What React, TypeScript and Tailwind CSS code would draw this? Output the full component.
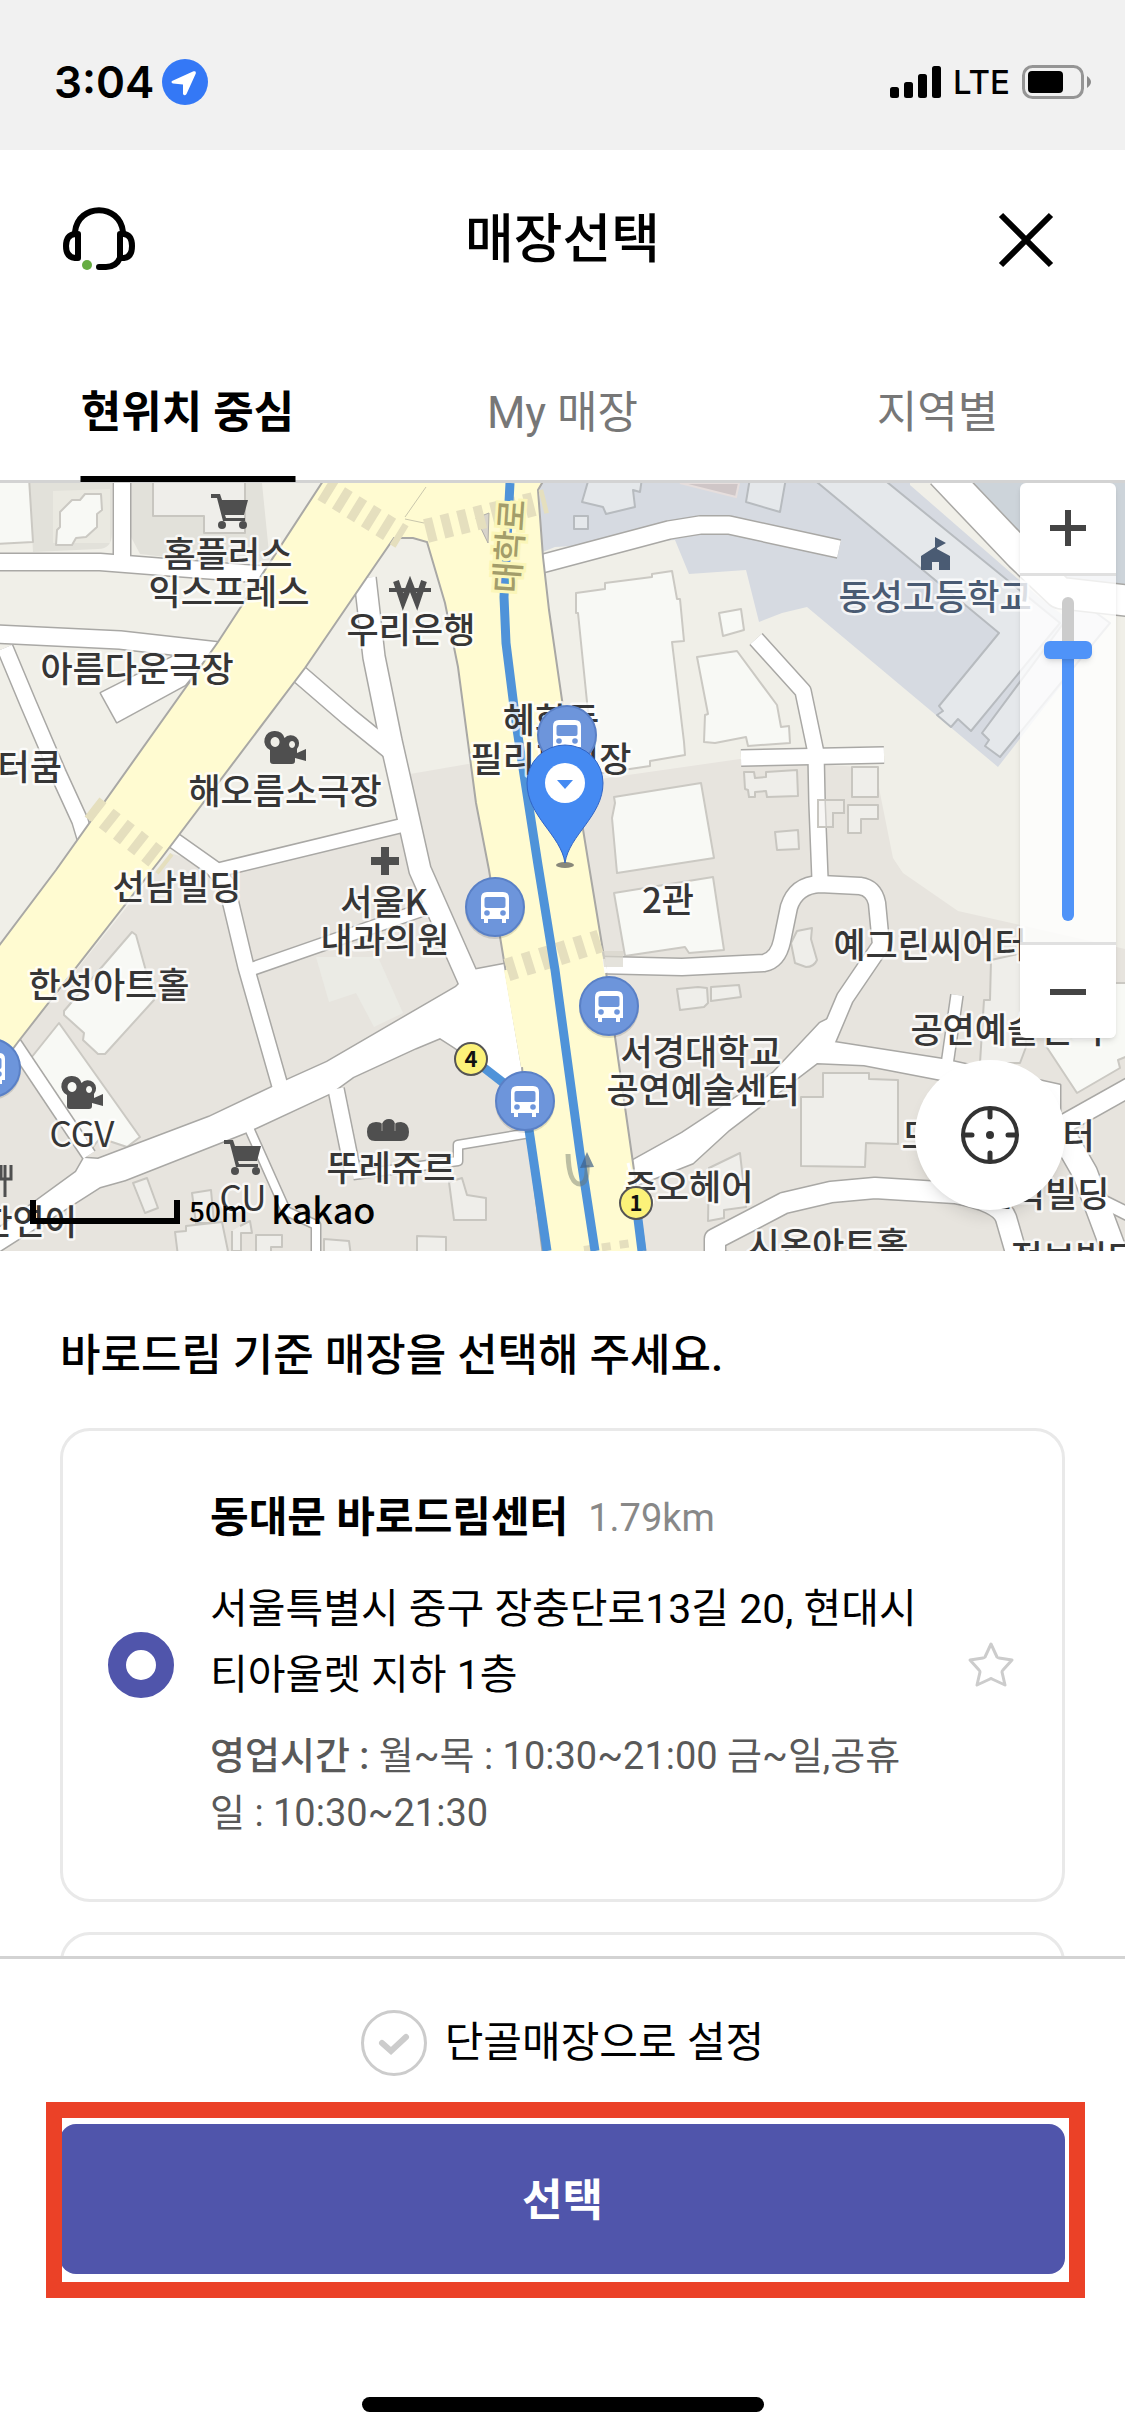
import React, { useState } from "react";

const ROADS: { d: string; w: number }[] = [
  { d: "M-5 79H100L164 84L270 92", w: 16 },
  { d: "M122 -5V78", w: 16 },
  { d: "M-5 151L120 157L218 168", w: 17 },
  { d: "M5 165L28 220L58 290L80 338L86 358", w: 15 },
  { d: "M365 95L374 174L391 258L405 320L420 387L470 500", w: 21 },
  { d: "M298 190L349 234L391 268", w: 17 },
  { d: "M214 388L404 342", w: 13 },
  { d: "M172 356L213 385L226 400L246 484L282 610", w: 15 },
  { d: "M246 488L430 424", w: 12 },
  { d: "M14 560L89 672", w: 13 },
  { d: "M249 645L286 728L316 742V773", w: 8 },
  { d: "M336 606L353 690", w: 15 },
  { d: "M353 692L458 678V662L530 650", w: 8 },
  { d: "M541 81L669 47L700 42H729L839 66", w: 17 },
  { d: "M756 156L803 208L816 270L817 320L820 396", w: 15 },
  { d: "M741 275L884 272", w: 15 },
  { d: "M598 482L682 484L764 480Q778 477 782 458L789 424Q796 402 820 401L860 403Q874 405 877 420L881 462L845 515L826 560", w: 16 },
  { d: "M957 512L947 582", w: 11 },
  { d: "M715 773V756L784 720L831 709L875 705L955 710Q1000 718 1006 735L1017 773", w: 20 },
  { d: "M1130 604L1055 646", w: 18 },
  { d: "M1062 650L1085 690L1116 773", w: 24 },
  { d: "M1098 716L1130 732", w: 12 },
  { d: "M942 -10L1020 72L1060 110L1130 118", w: 30 },
];

const ROAD_AREAS = [
  "M101 210L117 239L185 202L215 165H190Z",
  "M456 504L327 579L287 597L209 634L98 676L84 675L76 689L-5 748V771L100 704L125 697L247 649L331 610L353 594L416 565L440 555L454 564L502 597L530 590L510 480L473 487Z",
  "M820 540L773 590L682 650L628 680L632 704L693 680L729 647L817 580L864 582L942 597L1060 628V602L942 576L833 559L840 530Z",
];

const MAIN_ROAD =
  "M325 -5L218 159L56 387L-5 468V590L18 559L160 377L305 185L374 84L394 55H413L427 59L445 120L458 184L476 320L489 387L505 484L522 584L527 644L543 773H646L633 680L615 554L604 474L588 377L562 217L549 127L543 74L538 7L545 -5Z";

const LIGHT_BUILDINGS = [
  "M-5 -5H29L33 59L-5 61Z",
  "M576 110L605 106V100L652 94V91L672 88L677 116H680L684 158L672 159L684 259L685 272L650 278V283L596 291L587 219L578 130H576Z",
  "M697 174L737 168L777 222L781 244L789 243L790 260L748 263L746 254L715 260L704 259L705 232L708 231Z",
  "M719 130L741 126L744 147L723 153Z",
  "M614 314L701 300L714 375L617 390L612 335L615 320Z",
  "M614 410L713 394L724 467L689 470L685 464L625 473Z",
  "M56 62L57 47L60 44V29L72 17H80L85 11H101L102 27L97 31V44L86 54L76 55L72 62Z",
  "M132 449L136 452L154 517L105 571H98L83 557L84 550L64 532V528Z",
  "M59 540L140 654L127 664L100 655L90 668L31 575Z",
  "M1046 563L1077 610L1120 585L1118 577L1130 572V500H1060Z",
];

const BUILDINGS = [
  "M153 -5H245V50H204V33H153Z",
  "M744 289H754L755 295L766 294V289L797 287L798 313L767 314L766 308L755 309V314H749L748 307L745 306Z",
  "M852 284H878V314H852Z",
  "M848 322H878V336H861V350H848Z",
  "M775 349L798 347L799 366L777 367Z",
  "M797 448L812 445L811 456L817 477Q814 484 806 484L795 480L791 460Z",
  "M677 506L698 504L707 505L708 520L704 524L680 527Z",
  "M711 504L739 502L741 514L711 518Z",
  "M823 590H869V596L898 597V661L866 660L865 684L801 683V614H823Z",
  "M709 685L740 670L746 724L724 727V735L708 738Z",
  "M991 477L1022 470L1026 564L1020 580H980L984 517H990Z",
  "M133 700L147 695L158 725L145 730Z",
  "M175 749L186 748V743L222 739L229 773H178Z",
  "M324 756L349 758L351 773H324Z",
  "M417 753L446 754V773H417Z",
  "M449 699L462 695L467 712L486 715V737H454Z",
  "M192 710L211 707L214 740H196Z",
  "M256 752H282V764H271V773H256Z",
  "M240 743L250 738L252 750H241V768H232V748",
];

const SCHOOL_BUILDINGS = [
  "M589 -5L582 19L603 24L606 31L635 24L633 7L640 9L642 -5Z",
  "M574 33H588V46H574Z",
  "M750 -5L746 19L780 29L786 -5Z",
  "M812 -5L999 150L939 223L943 228L937 232L951 244L958 236L971 248L1060 140L882 -5Z",
  "M1080 118L982 250L989 257L985 263L1000 274L1110 140Z",
];

type Label = { t: string; x: number; y: number; a?: "start" | "middle" | "end"; c?: string; w?: number };
const LABELS: Label[] = [
  { t: "홈플러스", x: 228, y: 84 },
  { t: "익스프레스", x: 229, y: 122 },
  { t: "우리은행", x: 411, y: 160 },
  { t: "아름다운극장", x: 137, y: 199 },
  { t: "터쿰", x: 62, y: 297, a: "end" },
  { t: "해오름소극장", x: 285, y: 321 },
  { t: "선남빌딩", x: 177, y: 417 },
  { t: "서울K", x: 384, y: 432 },
  { t: "내과의원", x: 385, y: 470 },
  { t: "한성아트홀", x: 109, y: 515 },
  { t: "CGV", x: 82, y: 664, w: 400 },
  { t: "CU", x: 243, y: 728, w: 400 },
  { t: "뚜레쥬르", x: 391, y: 698 },
  { t: "한연어", x: 77, y: 752, a: "end" },
  { t: "혜화동", x: 551, y: 250 },
  { t: "필리핀시장", x: 551, y: 289 },
  { t: "동성고등학교", x: 935, y: 127, c: "#4a5b73" },
  { t: "2관", x: 668, y: 430 },
  { t: "예그린씨어터", x: 930, y: 475 },
  { t: "서경대학교", x: 701, y: 582 },
  { t: "공연예술센터", x: 703, y: 620 },
  { t: "공연예술센터", x: 1007, y: 560 },
  { t: "준오헤어", x: 689, y: 717 },
  { t: "드림아트센터", x: 998, y: 666 },
  { t: "신덕빌딩", x: 1045, y: 724 },
  { t: "시온아트홀", x: 828, y: 775 },
  { t: "정보빌딩", x: 1075, y: 788 },
];

function BusStop({ x, y }: { x: number; y: number }) {
  return (
    <g transform={`translate(${x} ${y})`}>
      <ellipse cy="2" rx="30" ry="30" fill="#000" opacity=".12" />
      <circle r="29" fill="#6d95db" stroke="#5a80c6" strokeWidth="2" />
      <path d="M-14 12V-9Q-14 -15 -8 -15H8Q14 -15 14 -9V12H11V16H7V12H-7V16H-11V12Z" fill="#fff" />
      <rect x="-10.500" y="-10" width="21" height="11" rx="2" fill="#6d95db" />
      <circle cx="-8" cy="6" r="2.800" fill="#6d95db" />
      <circle cx="8" cy="6" r="2.800" fill="#6d95db" />
    </g>
  );
}

function Cart({ x, y }: { x: number; y: number }) {
  return (
    <g transform={`translate(${x} ${y})`} fill="#4f4f4f">
      <path d="M0 0H9L11 6H37L33 21H14L15 24H34V27H12L6 4H0Z" />
      <circle cx="11" cy="31" r="4" />
      <circle cx="32" cy="31" r="4" />
    </g>
  );
}

function MovieCamera({ x, y }: { x: number; y: number }) {
  return (
    <g transform={`translate(${x} ${y})`} fill="#4f4f4f">
      <path
        fillRule="evenodd"
        d="M10 0A10 10 0 0 1 19.500 7A8 8 0 1 1 32 18V22L41 18V30L30 27V30Q30 33 27 33H8Q5 33 5 30V19A10 10 0 0 1 10 0ZM10 6A4.500 5 0 1 0 10.100 6ZM27 10A3 3.500 0 1 0 27.100 10Z"
      />
    </g>
  );
}

function SubwayExit({ x, y, n }: { x: number; y: number; n: string }) {
  return (
    <g transform={`translate(${x} ${y})`}>
      <circle r="16" fill="#fcf279" stroke="#555" strokeWidth="2" />
      <text y="8" textAnchor="middle" fontSize="22" fontWeight="700" fill="#111">
        {n}
      </text>
    </g>
  );
}

function MapCanvas() {
  return (
    <svg
      viewBox="0 0 1125 768"
      preserveAspectRatio="xMidYMid slice"
      className="block h-full w-full font-['Noto_Sans_CJK_KR',sans-serif]"
      role="img"
      aria-label="지도"
    >
      <rect width="1125" height="768" fill="#f0efe8" />
      <path
        d="M18 560L170 370L222 386L400 340L410 291L468 281L600 296L740 276L875 285L893 375L903 390L958 428L1020 442L1125 466V768H0V580Z"
        fill="#e7e4de"
      />
      <path d="M29 0H112V50Q112 66 98 66L33 69Z" fill="#e2e1da" />
      <path d="M53 8L110 6V60H53Z" fill="#eae9e1" />
      <path d="M129 0H262L270 80L200 78L140 71L131 54Z" fill="#e2e1da" />
      <path d="M316 474H378L403 530L374 544L356 510L329 519Z" fill="#ebebe5" />
      <path d="M555 64L540 70V0H1125V120L998 284L807 124L782 130L759 139L746 87L689 91L675 57Z" fill="#d6dae1" />
      <path d="M910 0H940L1050 110L1125 130V160H1100L1040 115L910 2Z" fill="#f0efe8" />
      <path d="M955 0H1125V110H1060L1020 65Z" fill="#cdd4da" />
      <path d="M680 0L736 14L739 0Z" fill="#cfc6c7" stroke="#e6dedd" strokeWidth="2" />

      <g strokeWidth="2" strokeLinejoin="round">
        {SCHOOL_BUILDINGS.map((d) => (
          <path key={d} d={d} fill="#e5e8eb" stroke="#b7bbbf" />
        ))}
        {LIGHT_BUILDINGS.map((d) => (
          <path key={d} d={d} fill="#f8f9f5" stroke="#cbc9c3" />
        ))}
        {BUILDINGS.map((d) => (
          <path key={d} d={d} fill="#efeeea" stroke="#c8c6c0" />
        ))}
      </g>

      <g fill="none" stroke="#a9a8a5" strokeLinejoin="round">
        {ROADS.map((r) => (
          <path key={r.d} d={r.d} strokeWidth={r.w + 3} />
        ))}
        {ROAD_AREAS.map((d) => (
          <path key={d} d={d} strokeWidth="3" />
        ))}
      </g>
      <g fill="none" stroke="#fff" strokeLinejoin="round">
        {ROADS.map((r) => (
          <path key={r.d} d={r.d} strokeWidth={r.w} />
        ))}
      </g>
      {ROAD_AREAS.map((d) => (
        <path key={d} d={d} fill="#fff" />
      ))}
      <path d="M818 317H844V330H833V344H818Z" fill="#efeeea" fillOpacity=".5" stroke="#c8c6c0" strokeWidth="2" />

      <path d={MAIN_ROAD} fill="#fffbd1" stroke="#a9a8a5" strokeWidth="2" />
      <path d="M506 487L523 584" stroke="#fffbd1" strokeWidth="4" />
      <path d="M604 476L606 490M628 680L634 702" stroke="#fff" strokeWidth="3" />
      <path d="M405 36L424 40M426 4L405 34" stroke="#c9c6ac" strokeWidth="1" fill="none" />
      <path d="M476 35L489 30L488 60Z" fill="#d8d4cb" stroke="#b0aea8" strokeWidth="1" />
      <g fill="none" stroke="#e5dfbe">
        <path d="M324 6L402 54" strokeWidth="25" strokeDasharray="9 8" />
        <path d="M426 48L546 18" strokeWidth="24" strokeDasharray="9 8" />
        <path d="M92 324L166 382" strokeWidth="24" strokeDasharray="9 9" />
        <path d="M507 487L600 458" strokeWidth="23" strokeDasharray="9 9" />
        <path d="M584 767L632 760" strokeWidth="8" strokeDasharray="9 9" />
      </g>
      <path d="M602 468H623V484H604Z" fill="#d8d6cc" opacity=".7" />

      <g fill="none" stroke="#4f93d9" strokeWidth="9">
        <path d="M510 0L504 114L506 160L516 240L538 382L555 487L580 670L595 768" />
        <path d="M483 584L510 605" />
        <path d="M528 640L547 768" />
        <path d="M636 720L642 768" />
      </g>
      <path d="M568 671Q569 701 580 701Q588 700 587 682" fill="none" stroke="#6b7468" strokeWidth="5" opacity=".45" />
      <path d="M580 685L587 669L594 684Z" fill="#3f5f88" opacity=".7" />

      <Cart x={211} y={11} />
      <Cart x={224} y={657} />
      <MovieCamera x={265} y={248} />
      <MovieCamera x={62} y={593} />
      <g fill="none" stroke="#4f4f4f">
        <path d="M396 98L403 119L410 101L417 119L424 98" strokeWidth="6" />
        <path d="M389 107H431" strokeWidth="4" />
        <path d="M385 364V392M371 378H399" strokeWidth="8" />
        <path d="M1 682V696H11V682M5 682V714" strokeWidth="3" />
      </g>
      <path
        d="M367 649Q367 639 376 639Q381 639 382 641Q384 636 389 636Q394 636 395 641Q396 639 401 639Q409 640 409 649Q409 658 401 658H375Q367 658 367 649Z"
        fill="#4f4f4f"
      />
      <path d="M382 641V648M395 641V648" stroke="#a3a19d" strokeWidth="1" />
      <path d="M921 87V73L935 64V54L946 60L937 65V66L950 73V87H939V79H932V87Z" fill="#4a5b73" />

      <g fontSize="35" stroke="#fff" strokeWidth="5" strokeOpacity=".75" strokeLinejoin="round" paintOrder="stroke">
        {LABELS.map((l, i) => (
          <text
            key={i}
            x={l.x}
            y={l.y}
            textAnchor={l.a ?? "middle"}
            fontWeight={l.w ?? 500}
            fill={l.c ?? "#363636"}
          >
            {l.t}
          </text>
        ))}
      </g>
      <text
        transform="translate(522 64) rotate(-86)"
        textAnchor="middle"
        fontSize="34"
        fontWeight="500"
        fill="#a39d6a"
        stroke="#fbf6b8"
        strokeWidth="6"
        paintOrder="stroke"
      >
        대학로
      </text>

      <BusStop x={567} y={252} />
      <BusStop x={495} y={424} />
      <BusStop x={525} y={618} />
      <BusStop x={609} y={523} />
      <BusStop x={-9} y={585} />
      <SubwayExit x={471} y={576} n="4" />
      <SubwayExit x={636} y={720} n="1" />

      <ellipse cx="565" cy="382" rx="9" ry="3" fill="#555" opacity=".7" />
      <path
        d="M565 380C561 352 527 333 527 300A38 38 0 0 1 603 300C603 333 569 352 565 380Z"
        fill="#458af2"
        stroke="#3164c4"
        strokeWidth="1"
      />
      <circle cx="565" cy="300" r="20" fill="#fff" />
      <path d="M557 297H573L565 306Z" fill="#458af2" />
    </svg>
  );
}

function StatusBar() {
  return (
    <div className="flex h-[150px] shrink-0 items-center justify-between bg-[#f1f1f1] pt-[14px] pr-[34px] pl-[54px]">
      <div className="flex items-center gap-2">
        <span className="font-[Inter,sans-serif] text-[44px] leading-none font-semibold">3:04</span>
        <svg viewBox="0 0 46 46" className="h-[46px] w-[46px]" aria-hidden="true">
          <circle cx="23" cy="23" r="23" fill="#3478f6" />
          <path
            d="M10 22L31.500 12.300Q34.500 11.500 33.800 14.500L24.500 35Q22.500 37.500 21 35V25.500L11 24.500Q8.500 23.300 10 22Z"
            fill="#fff"
          />
        </svg>
      </div>
      <div className="flex items-center">
        <svg viewBox="0 0 51 32" className="h-8 w-[51px]" aria-hidden="true">
          <rect x="0" y="21" width="9" height="11" rx="2.500" />
          <rect x="14" y="16" width="9" height="16" rx="2.500" />
          <rect x="28" y="8" width="9" height="24" rx="2.500" />
          <rect x="42" y="0" width="9" height="32" rx="2.500" />
        </svg>
        <span className="ml-3 font-[Inter,sans-serif] text-[33px] leading-none font-medium">LTE</span>
        <svg viewBox="0 0 69 34" className="ml-3 h-[34px] w-[69px]" aria-hidden="true">
          <rect x="1.500" y="1.500" width="59" height="31" rx="9" fill="none" stroke="#959595" strokeWidth="3" />
          <rect x="6" y="6" width="35" height="22" rx="4" />
          <path d="M65 11Q69 14 69 17Q69 20 65 23Z" fill="#8a8a8a" />
        </svg>
      </div>
    </div>
  );
}

function Header() {
  return (
    <header className="flex h-[180px] shrink-0 items-center justify-between px-15">
      <button type="button" aria-label="고객센터" className="flex w-19 items-center">
        <svg viewBox="0 0 76 66" className="h-[66px] w-19" fill="none" stroke="#000" strokeWidth="6" strokeLinecap="round" strokeLinejoin="round">
          <path d="M15 25C18 -4 60 -4 63 25" />
          <path d="M18 27V51H15Q6 50 6 39Q6 28 15 27Z" />
          <path d="M60 27V51H64Q72 50 72 39Q72 28 64 27Z" />
          <path d="M60 51Q56 60 46 60H39" />
          <circle cx="27" cy="58" r="5" fill="#66ac42" stroke="none" />
        </svg>
      </button>
      <h1 className="text-[53px] leading-none font-medium">매장선택</h1>
      <button type="button" aria-label="닫기" className="flex w-19 items-center justify-end">
        <svg viewBox="0 0 76 76" className="h-19 w-19" fill="none" stroke="#000" strokeWidth="6">
          <path d="M12 13L62 63M62 13L12 63" />
        </svg>
      </button>
    </header>
  );
}

const TABS = ["현위치 중심", "My 매장", "지역별"];

function Tabs({ active, onSelect }: { active: number; onSelect: (i: number) => void }) {
  return (
    <div role="tablist" className="grid h-[153px] shrink-0 grid-cols-3 border-b-3 border-[#d3d3d3]">
      {TABS.map((t, i) => (
        <button
          key={t}
          type="button"
          role="tab"
          aria-selected={i === active}
          onClick={() => onSelect(i)}
          className={
            i === active
              ? "relative flex items-center justify-center pt-4 text-[44px] leading-none font-bold"
              : "flex items-center justify-center pt-4 text-[44px] leading-none font-normal text-[#777]"
          }
        >
          {t}
          {i === active && <span className="absolute -bottom-[2px] left-1/2 h-[6px] w-[215px] -translate-x-1/2 bg-black" />}
        </button>
      ))}
    </div>
  );
}

function StoreMap() {
  const [level, setLevel] = useState(12);
  return (
    <section aria-label="매장 지도" className="relative h-[768px] shrink-0 overflow-hidden">
      <MapCanvas />
      <div className="absolute bottom-[27px] left-[30px] flex items-end font-['Noto_Sans_CJK_KR',sans-serif] text-black">
        <span className="h-6 w-[150px] border-6 border-t-0 border-black" />
        <span className="ml-[9px] text-[28px] leading-7 font-medium">50m</span>
        <span className="ml-6 text-[36px] leading-8 font-medium">kakao</span>
      </div>
      <div className="absolute top-0 right-[9px] flex w-24 flex-col overflow-hidden rounded-md shadow-md">
        <button
          type="button"
          aria-label="확대"
          onClick={() => setLevel(Math.min(14, level + 1))}
          className="flex h-[93px] items-center justify-center border-b-3 border-[#e0e0e0] bg-white"
        >
          <svg viewBox="0 0 36 36" className="h-9 w-9" stroke="#444" strokeWidth="6">
            <path d="M18 0V36M0 18H36" />
          </svg>
        </button>
        <div className="flex h-[366px] items-center justify-center bg-white/80">
          <input
            type="range"
            aria-label="지도 확대 수준"
            min={0}
            max={14}
            value={level}
            onChange={(e) => setLevel(Number(e.target.value))}
            style={{ "--rest": `${((14 - level) / 14) * 100}%` } as React.CSSProperties}
            className="h-[324px] w-12 appearance-none bg-transparent [direction:rtl] [writing-mode:vertical-lr] [&::-webkit-slider-runnable-track]:mx-auto [&::-webkit-slider-runnable-track]:h-full [&::-webkit-slider-runnable-track]:w-3 [&::-webkit-slider-runnable-track]:rounded-full [&::-webkit-slider-runnable-track]:bg-[linear-gradient(to_bottom,#ccc_var(--rest),#4f93f8_var(--rest))] [&::-webkit-slider-thumb]:-ml-[18px] [&::-webkit-slider-thumb]:h-[18px] [&::-webkit-slider-thumb]:w-12 [&::-webkit-slider-thumb]:appearance-none [&::-webkit-slider-thumb]:rounded-md [&::-webkit-slider-thumb]:bg-[#4f93f8] [&::-webkit-slider-thumb]:shadow-md"
          />
        </div>
        <button
          type="button"
          aria-label="축소"
          onClick={() => setLevel(Math.max(0, level - 1))}
          className="flex h-24 items-center justify-center border-t-3 border-[#e0e0e0] bg-white"
        >
          <svg viewBox="0 0 36 36" className="h-9 w-9" stroke="#444" strokeWidth="6">
            <path d="M0 18H36" />
          </svg>
        </button>
      </div>
      <button
        type="button"
        aria-label="내 위치"
        className="absolute right-15 bottom-[41px] flex h-[150px] w-[150px] items-center justify-center rounded-full bg-white shadow-lg"
      >
        <svg viewBox="0 0 60 60" className="h-15 w-15" fill="none" stroke="#333" strokeWidth="4" strokeLinecap="round">
          <circle cx="30" cy="30" r="27" />
          <path d="M30 4V12M30 48V56M4 30H12M48 30H56" strokeWidth="5" />
          <circle cx="30" cy="30" r="4" fill="#333" stroke="none" />
        </svg>
      </button>
    </section>
  );
}

function StoreCard() {
  return (
    <li className="flex items-center rounded-[30px] border-3 border-[#e9e9e9] px-[45px] py-[57px]">
      <input
        id="store-ddm"
        type="radio"
        name="store"
        defaultChecked
        className="h-[66px] w-[66px] shrink-0 appearance-none rounded-full border-3 border-[#ccc] bg-white checked:border-18 checked:border-[#5055ab]"
      />
      <label htmlFor="store-ddm" className="ml-9 block min-w-0 flex-1">
        <span className="flex items-center gap-5 leading-[60px]">
          <strong className="text-[42px] font-bold">동대문 바로드림센터</strong>
          <span className="text-[38px] text-[#888]">1.79km</span>
        </span>
        <span className="mt-7 block text-[41px] leading-[66px] break-all">
          서울특별시 중구 장충단로13길 20, 현대시티아울렛 지하 1층
        </span>
        <span className="mt-5 block text-[38px] leading-[57px] break-all text-[#595959]">
          <b className="font-medium">영업시간 :</b> 월~목 : 10:30~21:00 금~일,공휴일 : 10:30~21:30
        </span>
      </label>
      <button type="button" aria-label="즐겨찾기" className="ml-8 shrink-0 pr-0.5">
        <svg viewBox="0 0 48 48" className="h-12 w-12" fill="none" stroke="#ccc" strokeWidth="3" strokeLinejoin="round">
          <path d="M24 3L30 16Q31 17 32 17L45 19L36 29Q35 30 35 31L38 44L25 38Q24 37 23 38L10 44L13 31Q13 30 12 29L3 19L16 17Q17 17 18 16Z" />
        </svg>
      </button>
    </li>
  );
}

export default function App() {
  const [tab, setTab] = useState(0);
  return (
    <div className="flex h-screen flex-col overflow-hidden bg-white font-[Roboto,'Noto_Sans_CJK_KR',sans-serif] text-black">
      <StatusBar />
      <Header />
      <Tabs active={tab} onSelect={setTab} />
      <StoreMap />
      <main className="min-h-0 flex-1 overflow-hidden px-15 pt-[72px]">
        <h2 className="text-[44px] leading-[66px] font-medium">바로드림 기준 매장을 선택해 주세요.</h2>
        <ul className="mt-[39px] flex flex-col gap-[30px]">
          <StoreCard />
          <li className="h-[474px] rounded-[30px] border-3 border-[#e9e9e9]" />
        </ul>
      </main>
      <footer className="flex h-[480px] shrink-0 flex-col items-center border-t-3 border-[#d3d3d3] px-15 pt-[51px]">
        <label className="flex items-center gap-[18px] text-[42px] leading-[66px]">
          <span className="relative flex h-[66px] w-[66px]">
            <input
              type="checkbox"
              className="h-[66px] w-[66px] appearance-none rounded-full border-3 border-[#ccc] checked:border-[#5055ab] checked:bg-[#5055ab]"
            />
            <svg viewBox="0 0 66 66" className="pointer-events-none absolute inset-0" fill="none" stroke="#ccc" strokeWidth="6" strokeLinecap="round">
              <path d="M21 33L30 41L45 27" />
            </svg>
          </span>
          단골매장으로 설정
        </label>
        <div className="relative mt-12 w-full">
          <button type="button" className="h-[150px] w-full rounded-2xl bg-[#5055ab] pt-1 text-[44px] font-bold text-white">
            선택
          </button>
          <span className="pointer-events-none absolute -top-[22px] -right-5 -bottom-6 -left-[14px] border-16 border-[#eb4127]" />
        </div>
        <span className="mt-auto mb-6 h-[15px] w-[402px] rounded-full bg-black" />
      </footer>
    </div>
  );
}
